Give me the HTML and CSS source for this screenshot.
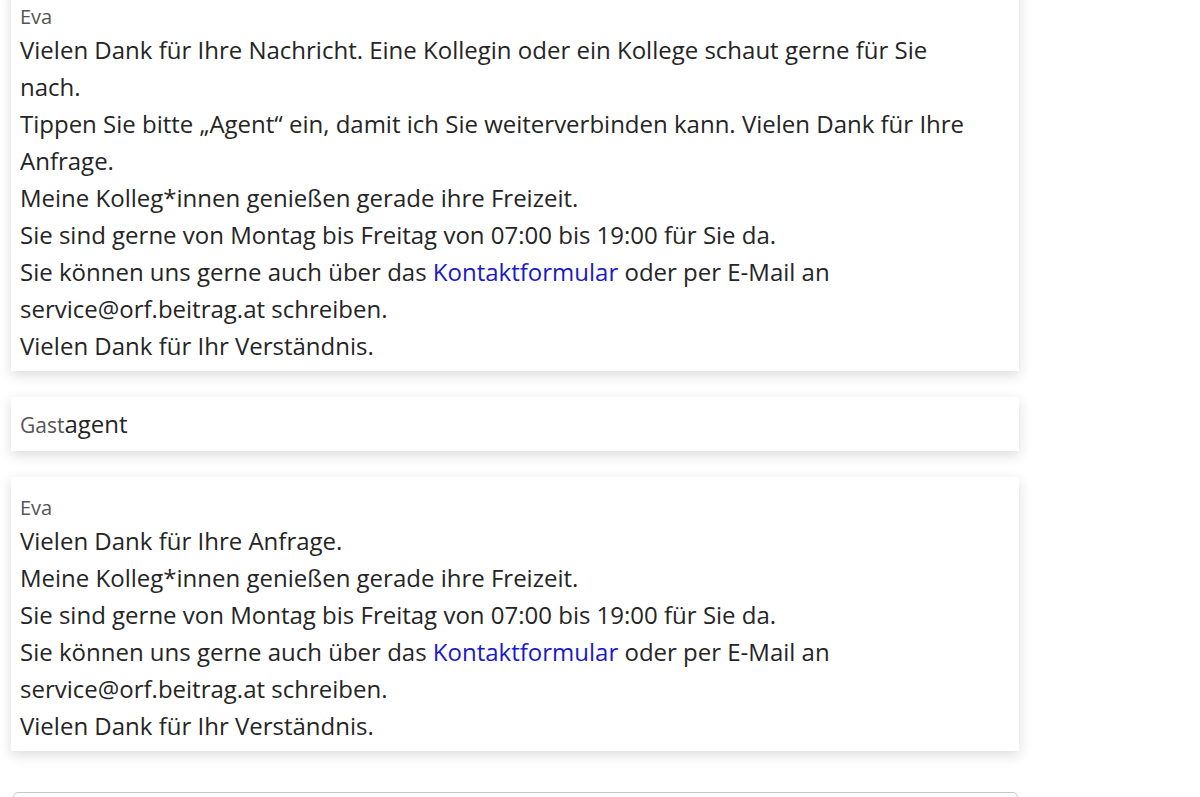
FILE: index.html
```html
<!DOCTYPE html>
<html lang="de">
<head>
<meta charset="utf-8">
<title>Chat</title>
<link rel="stylesheet" href="styles.css">
</head>
<body>
<div class="chat">
  <div class="msg">
    <div class="sender">Eva</div>
    <div class="text">
      <p>Vielen Dank für Ihre Nachricht. Eine Kollegin oder ein Kollege schaut gerne für Sie nach.</p>
      <p>Tippen Sie bitte „Agent“ ein, damit ich Sie weiterverbinden kann. Vielen Dank für Ihre Anfrage.</p>
      <p>Meine Kolleg*innen genießen gerade ihre Freizeit.</p>
      <p>Sie sind gerne von Montag bis Freitag von 07:00 bis 19:00 für Sie da.</p>
      <p>Sie können uns gerne auch über das <a href="#">Kontaktformular</a> oder per E-Mail an service@orf.beitrag.at schreiben.</p>
      <p>Vielen Dank für Ihr Verständnis.</p>
    </div>
  </div>
  <div class="msg guest">
    <span class="sender-inline">Gast</span><span class="text-inline">agent</span>
  </div>
  <div class="msg">
    <div class="sender">Eva</div>
    <div class="text">
      <p>Vielen Dank für Ihre Anfrage.</p>
      <p>Meine Kolleg*innen genießen gerade ihre Freizeit.</p>
      <p>Sie sind gerne von Montag bis Freitag von 07:00 bis 19:00 für Sie da.</p>
      <p>Sie können uns gerne auch über das <a href="#">Kontaktformular</a> oder per E-Mail an service@orf.beitrag.at schreiben.</p>
      <p>Vielen Dank für Ihr Verständnis.</p>
    </div>
  </div>
  <div class="input-box"></div>
</div>
</body>
</html>
```
FILE: styles.css
```css
html, body {
  margin: 0;
  padding: 0;
  background: #ffffff;
  overflow: hidden;
}
body {
  font-family: "Open Sans", "Noto Sans", sans-serif;
  color: #252525;
}
.chat {
  width: 1008px;
  margin-left: 11px;
  margin-top: -14px;
  display: flex;
  flex-direction: column;
  gap: 26px;
}
.msg {
  background: #ffffff;
  box-shadow: 0 4px 12px rgba(0, 0, 0, 0.14);
  padding: 16px 40px 7px 9px;
}
.sender {
  font-size: 20px;
  line-height: 29px;
  color: #555555;
}
.text {
  font-size: 24px;
  line-height: 37px;
}
.text p {
  margin: 0;
}
.text a {
  color: #1a1ac8;
  text-decoration: none;
}
.msg.guest {
  padding: 8px 9px 9px 9px;
  font-size: 24px;
  line-height: 37px;
}
.sender-inline {
  font-size: 21px;
  line-height: 1;
  color: #555555;
}
.text-inline {
  line-height: 1;
}
.input-box {
  margin-top: 15px;
  margin-left: 2px;
  margin-right: 1px;
  height: 40px;
  border: 1px solid #c8c8c8;
  border-radius: 5px;
  background: #fff;
}
```
